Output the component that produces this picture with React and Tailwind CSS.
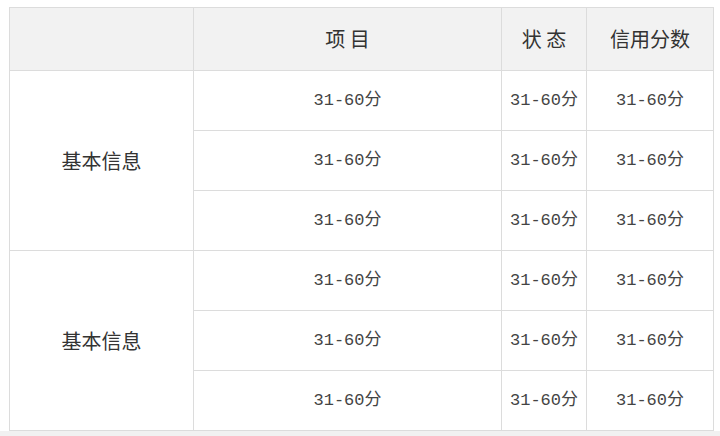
import React from "react";

const groups = [
  { name: "基本信息", rows: 3 },
  { name: "基本信息", rows: 3 },
];

const cjk = { fontFamily: '"Noto Sans CJK SC", "Noto Sans", sans-serif' };
const num = { fontFamily: '"Liberation Mono", "Noto Sans CJK SC", monospace' };

const App = () => {
  return (
    <div className="w-[720px] h-[436px] bg-[#f1f1f1] overflow-hidden">
      <div className="bg-white pt-[7px] pl-[9px] h-[431px]">
        <table className="border-collapse table-fixed w-[704px] text-[#333]" style={cjk}>
          <colgroup>
            <col className="w-[184px]" />
            <col className="w-[308px]" />
            <col className="w-[85px]" />
            <col className="w-[127px]" />
          </colgroup>
          <thead>
            <tr className="h-[63px] bg-[#f2f2f2]">
              <th className="border border-[#dcdcdc] font-normal"></th>
              <th className="border border-[#dcdcdc] font-normal text-[20px]">项 目</th>
              <th className="border border-[#dcdcdc] font-normal text-[20px]">状 态</th>
              <th className="border border-[#dcdcdc] font-normal text-[20px]">信用分数</th>
            </tr>
          </thead>
          <tbody>
            {groups.map((g, gi) =>
              Array.from({ length: g.rows }).map((_, ri) => (
                <tr key={gi + "-" + ri} className="h-[60px]">
                  {ri === 0 && (
                    <td rowSpan={g.rows} className="border border-[#dcdcdc] text-center text-[20px]">
                      {g.name}
                    </td>
                  )}
                  <td className="border border-[#dcdcdc] text-center text-[17px] text-[#444]" style={num}>31-60分</td>
                  <td className="border border-[#dcdcdc] text-center text-[17px] text-[#444]" style={num}>31-60分</td>
                  <td className="border border-[#dcdcdc] text-center text-[17px] text-[#444]" style={num}>31-60分</td>
                </tr>
              ))
            )}
          </tbody>
        </table>
      </div>
    </div>
  );
};

export default App;
